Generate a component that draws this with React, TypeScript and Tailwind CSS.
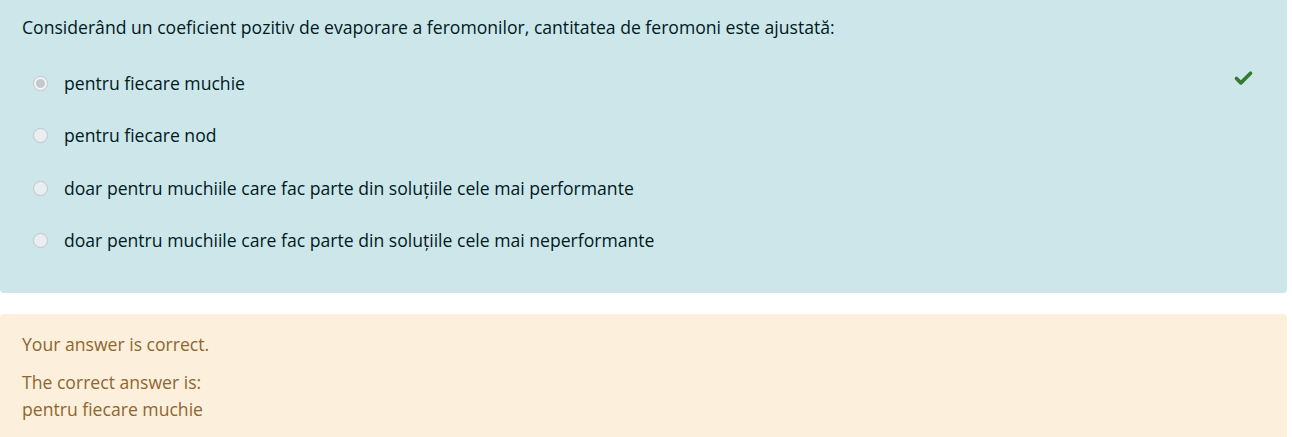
import { Check } from 'lucide-react';

const options = [
  { label: 'pentru fiecare muchie', checked: true },
  { label: 'pentru fiecare nod', checked: false },
  { label: 'doar pentru muchiile care fac parte din soluțiile cele mai performante', checked: false },
  { label: 'doar pentru muchiile care fac parte din soluțiile cele mai neperformante', checked: false },
];

export default function App() {
  return (
    <div className="w-[1292px] h-[437px] overflow-hidden bg-white font-['Open_Sans',sans-serif] text-[17.6px]">
      <div className="w-[1287px] bg-[#cce6ea] text-[#001a1e] rounded-b-[4px] pl-[22px] pr-8 pt-[12px] h-[293px]">
        <p className="leading-[30px]">
          Considerând un coeficient pozitiv de evaporare a feromonilor, cantitatea de feromoni este ajustată:
        </p>
        <div className="mt-[26px] flex flex-col gap-[22.5px]">
          {options.map((o) => (
            <div key={o.label} className="flex items-center h-[30px]">
              <span
                className={`w-[15px] h-[15px] ml-[11px] rounded-full border border-[#c2c6ca] flex items-center justify-center ${
                  o.checked ? 'bg-[#f1f3f5]' : 'bg-[#e9eef0]'
                }`}
              >
                {o.checked && <span className="w-[9px] h-[9px] rounded-full bg-[#c6c9cc]" />}
              </span>
              <span className="ml-[16px] flex-1">{o.label}</span>
              {o.checked && <Check size={21} strokeWidth={4.2} className="text-[#357a32] mr-[1px] -mt-[10px]" />}
            </div>
          ))}
        </div>
      </div>
      <div className="mt-[21px] w-[1287px] h-[130px] bg-[#fcefdc] text-[#8e662e] rounded-t-[4px] pl-[22px] pt-[16px]">
        <p className="leading-[28px]">Your answer is correct.</p>
        <p className="mt-[11px] leading-[27px]">The correct answer is:</p>
        <p className="leading-[27px]">pentru fiecare muchie</p>
      </div>
    </div>
  );
}
